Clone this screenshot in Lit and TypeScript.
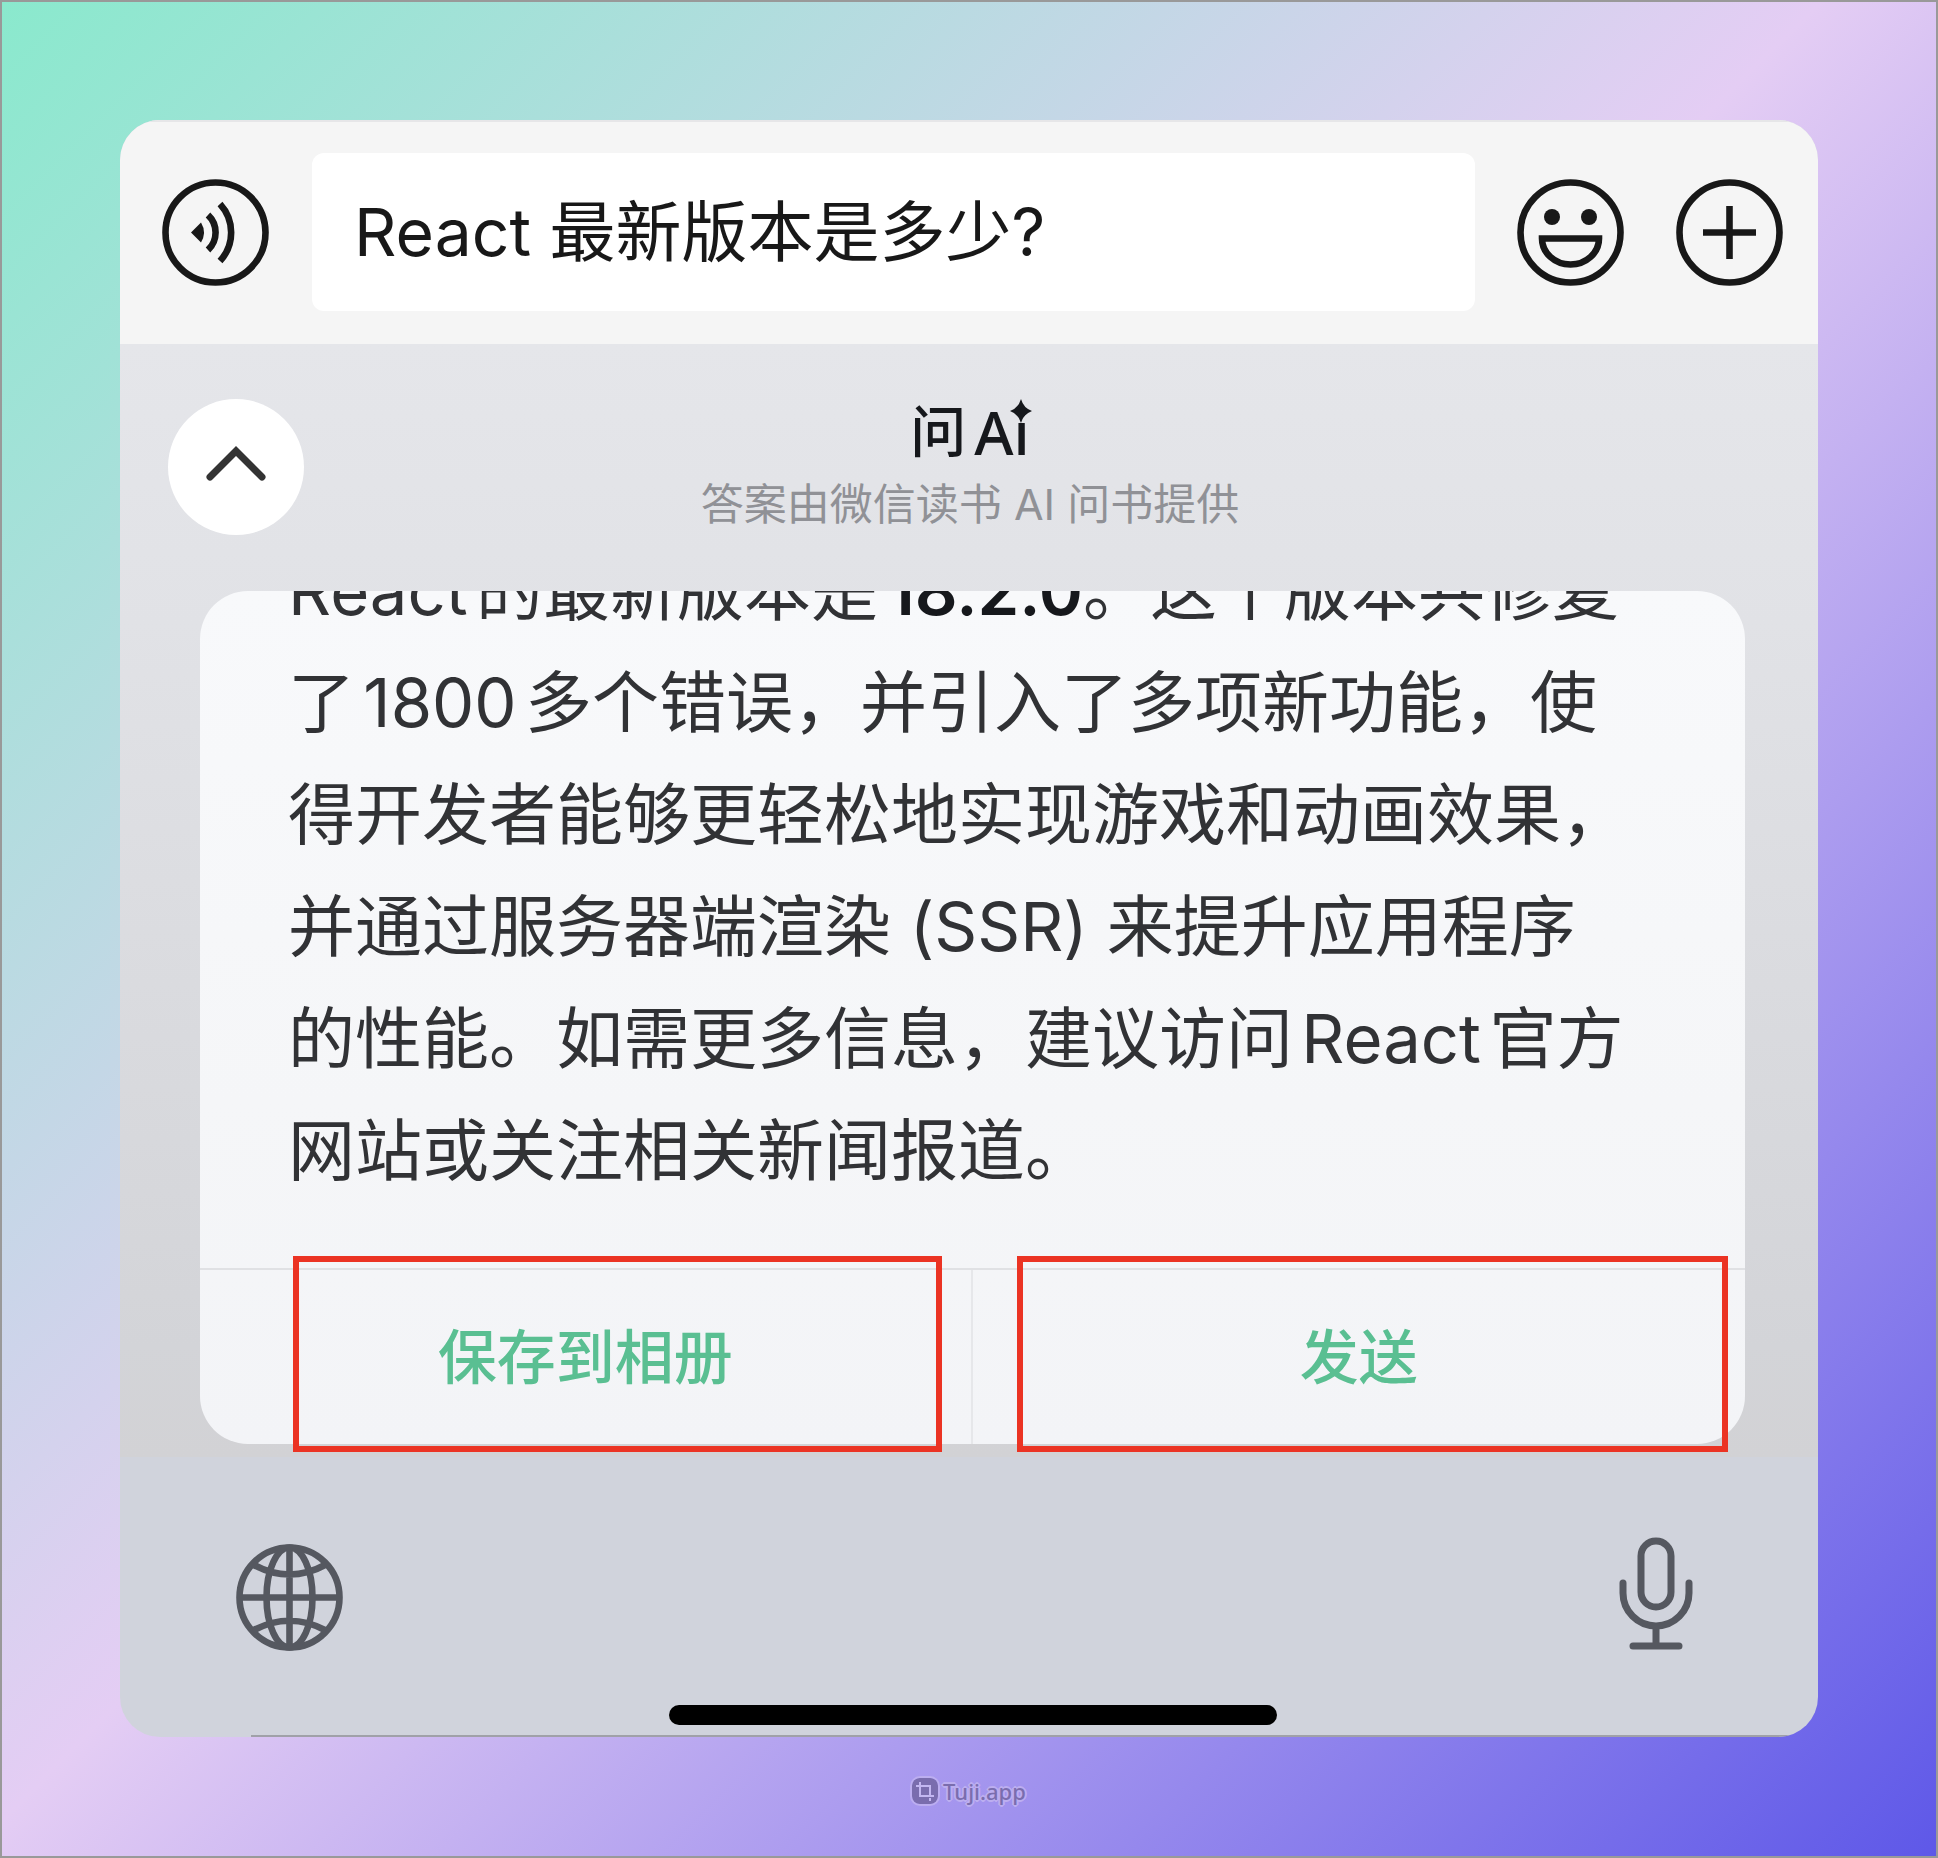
import { LitElement, html, css, svg } from "lit";
import { customElement, property } from "lit/decorators.js";

const icons = {
  voice: svg`
    <circle cx="53.5" cy="53.5" r="50" />
    <path class="solid" d="M29 53.5 39 43.5Q45 53.5 39 63.5Z" />
    <path d="M46 36A24 24 0 0 1 46 71" />
    <path d="M58 25A42 42 0 0 1 58 82" />`,
  emoji: svg`
    <circle cx="53.5" cy="53.5" r="50" />
    <circle class="solid" cx="35" cy="38" r="8" />
    <circle class="solid" cx="72" cy="38" r="8" />
    <path d="M25 59.5H82A28.5 26 0 0 1 25 59.5Z" />`,
  plus: svg`
    <circle cx="53.5" cy="53.5" r="50" />
    <path d="M53.5 27V80M27 53.5H80" />`,
  globe: svg`
    <circle cx="53.5" cy="53.5" r="50" />
    <ellipse cx="53.5" cy="53.5" rx="23" ry="50" />
    <path d="M53.5 4V103M4 53.5H103M17 20.500Q53.500 40.500 90 20.500M17 86.500Q53.500 67 90 86.500" />`,
};

@customElement("round-icon")
class RoundIcon extends LitElement {
  @property() name: keyof typeof icons = "plus";

  static styles = css`
    :host {
      display: block;
      width: 107px;
      height: 107px;
    }
    .icon {
      display: block;
      fill: none;
      stroke: currentColor;
      stroke-width: 6.6;
    }
    .solid {
      fill: currentColor;
      stroke: none;
    }
  `;

  render() {
    return html`<svg class="icon" viewBox="0 0 107 107" aria-hidden="true">${icons[this.name]}</svg>`;
  }
}

@customElement("app-root")
class AppRoot extends LitElement {
  static styles = css`
    :host {
      display: block;
      --sans: "Inter", "Noto Sans CJK SC", sans-serif;
      font-family: var(--sans);
    }
    * {
      box-sizing: border-box;
    }
    button {
      margin: 0;
      padding: 0;
      border: 0;
      background: none;
      color: inherit;
      font: inherit;
    }
    .page {
      min-height: 100vh;
      padding: 118px 118px 0;
      border: 2px solid #999;
      background: linear-gradient(135deg, #8ae9cd 0%, #e4cdf4 48%, #5e58e8 100%);
    }
    .phone {
      overflow: hidden;
      border-radius: 40px;
      background: #d0d3dc;
    }

    .composer {
      display: flex;
      align-items: center;
      padding: 31px 35px 33px 42px;
      border-top: 2px solid #e6e6e8;
      background: #f5f5f5;
      color: #181818;
    }
    .field {
      flex: 1;
      min-width: 0;
      height: 158px;
      margin: 0 42px 0 43px;
      padding: 0 42px 10px;
      border: 0;
      border-radius: 12px;
      outline: none;
      background: #fff;
      color: #181818;
      font: 400 66px var(--sans);
    }
    .add {
      margin-left: 52px;
    }

    .panel {
      padding-bottom: 13px;
      background: linear-gradient(#e5e6ea, #e1e2e6 25%, #d3d4d8 90%, #d2d2d5);
    }
    .panel-head {
      display: grid;
      grid-template-columns: 136px 1fr 136px;
      align-items: center;
      padding: 49px 46px 50px 48px;
      min-height: 247px;
    }
    .collapse {
      display: grid;
      place-items: center;
      width: 136px;
      height: 136px;
      border-radius: 50%;
      background: #fff;
    }
    .titles {
      text-align: center;
    }
    .title {
      display: flex;
      justify-content: center;
      gap: 8px;
      margin: 0;
      color: #16181c;
      font-weight: 500;
      font-size: 56px;
      line-height: 74px;
    }
    .latin {
      position: relative;
      font-size: 60px;
      font-family: "Noto Sans", sans-serif;
    }
    .spark {
      position: absolute;
      top: 4px;
      right: -2px;
      width: 22px;
      height: 24px;
    }
    .subtitle {
      margin: 0;
      color: #909196;
      font-size: 43px;
      line-height: 70px;
    }

    .answer {
      margin: 0 73px 0 80px;
      border-radius: 48px;
      background: linear-gradient(#f8f9fb, #f5f6f8 60%, #f3f4f7);
    }
    .scroll {
      display: flex;
      flex-direction: column;
      justify-content: flex-end;
      height: 677px;
      padding: 0 88px 61px;
      overflow: hidden;
    }
    .text {
      margin: 0;
      color: #313235;
      font-size: 67px;
      line-height: 112px;
      white-space: nowrap;
      text-autospace: normal;
    }
    .text strong {
      color: #16181c;
      font-weight: 600;
    }
    .actions {
      display: grid;
      grid-template-columns: 1fr 1fr;
      border-top: 2px solid #e0e1e4;
    }
    .cell {
      position: relative;
      display: grid;
    }
    .cell:first-child {
      border-right: 2px solid #e6e7ea;
    }
    .action {
      height: 174px;
      padding-bottom: 8px;
      color: #5abf92;
      font-weight: 500;
      font-size: 59px;
    }
    .mark {
      position: absolute;
      inset: -14px 29px -8px 93px;
      border: 6px solid #eb3323;
      pointer-events: none;
    }
    .mark.send {
      inset: -14px 17px -8px 44px;
    }

    .keyboard {
      color: #555860;
    }
    .keys {
      display: flex;
      justify-content: space-between;
      align-items: flex-end;
      padding: 80px 125px 54px 116px;
    }
    .mic,
    .chevron {
      display: block;
      fill: none;
      stroke: currentColor;
      stroke-width: 7;
      stroke-linecap: round;
    }
    .home-row {
      display: flex;
      justify-content: center;
      padding: 0 0 10px 8px;
    }
    .home {
      width: 36%;
      height: 20px;
      border-radius: 10px;
      background: #000;
    }
    .edge {
      height: 2px;
      margin-left: 131px;
      background: #a0a1a8;
    }

    .watermark {
      display: flex;
      justify-content: center;
      align-items: center;
      gap: 5px;
      height: 108px;
      color: #7a6dae;
      font: 500 22px "Noto Sans", sans-serif;
    }
    .badge {
      display: block;
      border-radius: 8px;
      box-shadow: 0 0 0 2px #bcaef0;
    }
    .brand {
      text-shadow: 2px 0 #bcaef0, -2px 0 #bcaef0, 0 2px #bcaef0, 0 -2px #bcaef0,
        1px 1px #bcaef0, -1px 1px #bcaef0, 1px -1px #bcaef0, -1px -1px #bcaef0;
    }
  `;

  render() {
    return html`
      <main class="page">
        <section class="phone">
          <div class="composer">
            <button aria-label="语音"><round-icon name="voice"></round-icon></button>
            <input class="field" type="text" aria-label="消息" .value=${"React 最新版本是多少?"} />
            <button aria-label="表情"><round-icon name="emoji"></round-icon></button>
            <button class="add" aria-label="更多"><round-icon name="plus"></round-icon></button>
          </div>

          <div class="panel">
            <header class="panel-head">
              <button class="collapse" aria-label="收起">
                <svg class="chevron" width="66" height="50" viewBox="0 0 66 50">
                  <path stroke-linejoin="miter" d="M7 35 33 9 59 35" stroke="#333" />
                </svg>
              </button>
              <div class="titles">
                <h1 class="title">
                  <span>问</span>
                  <span class="latin">Ai<svg class="spark" viewBox="0 0 22 24" aria-hidden="true">
                      <path fill="currentColor" d="M11 0Q13.500 9 22 12Q13.500 15 11 24Q8.500 15 0 12Q8.500 9 11 0Z" /></svg
                  ></span>
                </h1>
                <p class="subtitle">答案由微信读书 AI 问书提供</p>
              </div>
            </header>

            <article class="answer">
              <div class="scroll">
                <p class="text">
                  React的最新版本是<strong>18.2.0</strong>。这个版本共修复<br />
                  了1800多个错误，并引入了多项新功能，使<br />
                  得开发者能够更轻松地实现游戏和动画效果，<br />
                  并通过服务器端渲染 (SSR) 来提升应用程序<br />
                  的性能。如需更多信息，建议访问React官方<br />
                  网站或关注相关新闻报道。
                </p>
              </div>
              <div class="actions">
                <div class="cell">
                  <button class="action">保存到相册</button>
                  <span class="mark"></span>
                </div>
                <div class="cell">
                  <button class="action">发送</button>
                  <span class="mark send"></span>
                </div>
              </div>
            </article>
          </div>

          <footer class="keyboard">
            <div class="keys">
              <button aria-label="切换键盘"><round-icon name="globe"></round-icon></button>
              <button aria-label="听写">
                <svg class="mic" width="74" height="114" viewBox="0 0 74 114">
                  <rect x="22" y="4" width="30" height="66" rx="15" />
                  <path d="M4 46V56A33 33 0 0 0 70 56V46M37 89V109M14 109H60" />
                </svg>
              </button>
            </div>
            <div class="home-row"><div class="home"></div></div>
            <div class="edge"></div>
          </footer>
        </section>

        <div class="watermark">
          <svg class="badge" width="26" height="26" viewBox="0 0 26 26" aria-hidden="true">
            <rect width="26" height="26" rx="7" fill="#7a6dae" />
            <path d="M8 4V18H22M4 8H18V18M18 20V23" fill="none" stroke="#c3b7f1" stroke-width="2" />
          </svg>
          <span class="brand">Tuji.app</span>
        </div>
      </main>
    `;
  }
}
